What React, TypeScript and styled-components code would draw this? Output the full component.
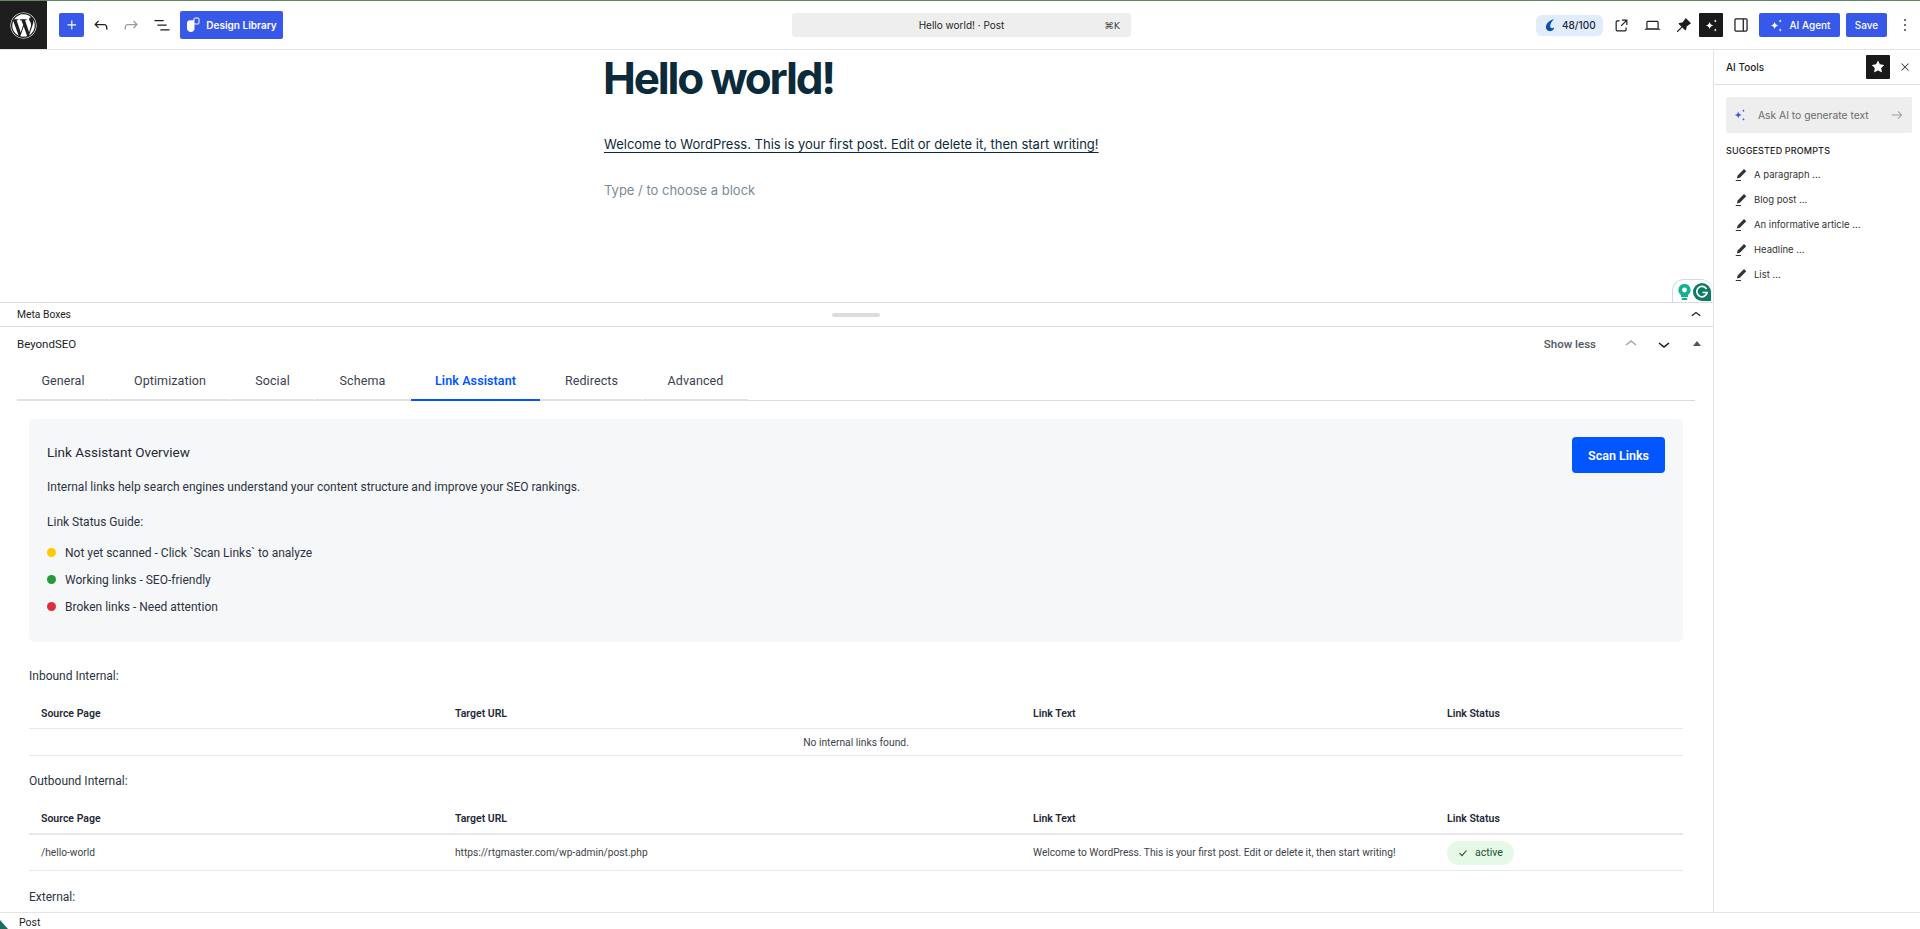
import React from "react";
import styled, { createGlobalStyle } from "styled-components";
import { FaWordpress } from "react-icons/fa";

const GlobalStyle = createGlobalStyle`
  html, body {
    margin: 0;
    padding: 0;
    background: #fff;
    font-family: Inter, "Liberation Sans", sans-serif;
    color: #1e1e1e;
  }
  * { box-sizing: border-box; }
`;

const Icon = ({ d, size = 24, color = "currentColor" }: { d: string; size?: number; color?: string }) => (
  <svg width={size} height={size} viewBox="0 0 24 24" fill={color} aria-hidden="true">
    <path d={d} />
  </svg>
);

const paths = {
  plus: "M11 12.5V17.5H12.5V12.5H17.5V11H12.5V6H11V11H6V12.5H11Z",
  undo: "M18.3 11.7c-.6-.6-1.4-.9-2.3-.9H6.7l2.9-3.3-1.1-1-4.5 5L8.5 16l1-1-2.7-2.7H16c.5 0 .9.2 1.3.5 1 1 1 3.4 1 4.5v.3h1.5v-.2c0-1.5 0-4.3-1.5-5.7z",
  redo: "M15.6 6.5l-1.1 1 2.9 3.3H8c-.9 0-1.7.3-2.3.9-1.4 1.5-1.4 4.2-1.4 5.6v.2h1.5v-.3c0-1.1 0-3.5 1-4.5.3-.3.7-.5 1.3-.5h9.2L14.5 15l1.1 1.1 4.6-4.6-4.6-5z",
  list: "M3 6h11v1.5H3V6zm3.5 5.5h11V13h-11v-1.5zM21 17H10v1.5h11V17z",
  external: "M19.5 4.5h-7V6h4.44l-5.97 5.97 1.06 1.06L18 7.06v4.44h1.5v-7Zm-13 1a2 2 0 0 0-2 2v10a2 2 0 0 0 2 2h10a2 2 0 0 0 2-2v-3H17v3a.5.5 0 0 1-.5.5h-10a.5.5 0 0 1-.5-.5v-10a.5.5 0 0 1 .5-.5h3V5.5h-3Z",
  laptop: "M20.5 16h-.7V8c0-1.1-.9-2-2-2H6.2c-1.1 0-2 .9-2 2v8h-.7c-.8 0-1.5.7-1.5 1.5h20c0-.8-.7-1.5-1.5-1.5zM5.7 8c0-.3.2-.5.5-.5h11.6c.3 0 .5.2.5.5v7.6H5.7V8z",
  pin: "m21.5 9.1-6.6-6.6-4.2 5.6c-1.2-.1-2.4.1-3.6.7-.1 0-.1.1-.2.1-.5.3-.9.6-1.2.9l3.7 3.7-5.7 5.7v1.1h1.1l5.7-5.7 3.7 3.7c.4-.4.7-.8.9-1.2.1-.1.1-.2.2-.3.6-1.1.8-2.4.6-3.6l5.6-4.1z",
  sidebar: "M18 4H6c-1.1 0-2 .9-2 2v12c0 1.1.9 2 2 2h12c1.1 0 2-.9 2-2V6c0-1.1-.9-2-2-2zm-4 14.5H6c-.3 0-.5-.2-.5-.5V6c0-.3.2-.5.5-.5h8v13zm4.5-.5c0 .3-.2.5-.5.5h-2.5v-13H18c.3 0 .5.2.5.5v12z",
  dots: "M13 19h-2v-2h2v2zm0-6h-2v-2h2v2zm0-6h-2V5h2v2z",
  close: "m13.06 12 6.47-6.47-1.06-1.06L12 10.94 5.53 4.47 4.47 5.53 10.94 12l-6.47 6.47 1.06 1.06L12 13.06l6.47 6.47 1.06-1.06L13.06 12Z",
  star: "M11.776 4.454a.25.25 0 01.448 0l2.069 4.192a.25.25 0 00.188.137l4.626.672a.25.25 0 01.139.426l-3.348 3.263a.25.25 0 00-.072.222l.79 4.607a.25.25 0 01-.362.263l-4.138-2.175a.25.25 0 00-.232 0l-4.138 2.175a.25.25 0 01-.363-.263l.79-4.607a.25.25 0 00-.071-.222L4.754 9.881a.25.25 0 01.139-.426l4.626-.672a.25.25 0 00.188-.137l2.069-4.192z",
  pencil: "m19 7-3-3-8.5 8.5-1 4 4-1L19 7Zm-7 11.5H5V20h7v-1.5Z",
  up: "M6.5 12.4L12 8l5.5 4.4-.9 1.2L12 10l-4.5 3.6-1-1.2z",
  down: "M17.5 11.6L12 16l-5.5-4.4.9-1.2L12 14l4.5-3.6 1 1.2z",
  arrow: "m14 6-1.1 1 4.2 4.3H4v1.5h13.1l-4.2 4.2 1.1 1 6-6-6-6z",
  sparkle: "M9 6c.7 3.6 2.4 5.3 6 6-3.6.7-5.3 2.4-6 6-.7-3.6-2.4-5.3-6-6 3.6-.7 5.3-2.4 6-6Zm9-4c.3 1.6 1 2.4 2.6 2.7-1.6.3-2.3 1-2.6 2.6-.3-1.6-1-2.3-2.6-2.6C17 4.4 17.7 3.6 18 2Zm0 14.5c.3 1.6 1 2.4 2.6 2.7-1.6.3-2.3 1-2.6 2.6-.3-1.6-1-2.3-2.6-2.6 1.6-.3 2.3-1.1 2.6-2.7Z",
};

const Page = styled.div`
  height: 929px;
  display: flex;
  flex-direction: column;
  overflow: hidden;
  border-top: 1px solid #5c8a60;
`;

const Header = styled.header`
  height: 49px;
  flex: none;
  display: grid;
  grid-template-columns: 792px 339px 1fr;
  align-items: center;
  border-bottom: 1px solid #e4e4e4;
`;

const HeaderLeft = styled.div`
  display: flex;
  align-items: center;
  height: 48px;
`;

const LogoBox = styled.div`
  width: 47px;
  height: 48px;
  background: #1e1e1e;
  color: #fff;
  display: flex;
  align-items: center;
  justify-content: center;
  margin-right: 12px;
`;

const BlueButton = styled.button<{ $w: number; $h?: number; $weight?: number }>`
  width: ${(p) => p.$w}px;
  height: ${(p) => p.$h ?? 24}px;
  border: 0;
  border-radius: 2px;
  background: #3858e9;
  color: #fff;
  padding: 0;
  display: flex;
  align-items: center;
  justify-content: center;
  gap: 6px;
  font: ${(p) => p.$weight ?? 500} 10px Inter, sans-serif;
`;

const IconSlot = styled.span<{ $w?: number; $color?: string; $push?: boolean }>`
  width: ${(p) => p.$w ?? 30}px;
  flex: none;
  display: flex;
  align-items: center;
  justify-content: center;
  color: ${(p) => p.$color ?? "#1e1e1e"};
  margin-left: ${(p) => (p.$push ? "auto" : 0)};
`;

const CommandBar = styled.div`
  height: 24px;
  background: #eeeeee;
  border-radius: 3px;
  font-size: 10px;
  color: #1e1e1e;
  position: relative;
  display: flex;
  align-items: center;
  justify-content: center;
`;

const Shortcut = styled.span`
  position: absolute;
  right: 11px;
  font-family: "DejaVu Sans", sans-serif;
  font-size: 9.5px;
  color: #444;
`;

const HeaderRight = styled.div`
  display: flex;
  align-items: center;
  padding-left: 405px;
`;

const ScorePill = styled.div`
  width: 67px;
  height: 21px;
  border-radius: 6px;
  background: #e1edfd;
  display: flex;
  align-items: center;
  gap: 5px;
  padding-left: 8px;
  font-size: 10px;
  font-weight: 500;
  color: #1e2a3a;
  margin-right: 3px;
`;

const BlackTile = styled.div<{ $push?: boolean }>`
  width: 24px;
  height: 24px;
  background: #1a1a1a;
  color: #fff;
  border-radius: 1px;
  display: flex;
  align-items: center;
  justify-content: center;
  flex: none;
  margin-left: ${(p) => (p.$push ? "auto" : 0)};
`;

const Body = styled.div`
  flex: 1;
  min-height: 0;
  display: flex;
`;

const Main = styled.main`
  width: 1713px;
  flex: none;
  display: flex;
  flex-direction: column;
  min-height: 0;
`;

const Canvas = styled.section`
  height: 252px;
  flex: none;
  padding-left: 604px;
  position: relative;
  color: #0c2b3a;
`;

const Title = styled.h1`
  margin: 0 0 0 -1px;
  height: 61px;
  font-size: 44px;
  line-height: 56px;
  font-weight: 700;
  letter-spacing: -2.2px;
`;

const Paragraph = styled.p`
  margin: 23px 0 0;
  font-size: 13px;
  line-height: 20px;
  text-decoration: underline;
  text-underline-offset: 3px;
  text-decoration-thickness: 1px;
`;

const Placeholder = styled.p`
  margin: 26px 0 0;
  font-size: 13px;
  line-height: 20px;
  color: #7b8b95;
`;

const GrammarlyWidget = styled.div`
  position: absolute;
  right: 0;
  bottom: 0;
  width: 41px;
  height: 23px;
  background: #fff;
  border: 1px solid #d5d9e3;
  border-bottom: 0;
  border-right: 0;
  border-radius: 12px 12px 0 0;
  display: flex;
  align-items: center;
  justify-content: space-between;
  padding: 2px 2px 0 4px;
`;

const MetaBar = styled.div`
  height: 25px;
  flex: none;
  display: flex;
  align-items: center;
  justify-content: space-between;
  border-top: 1px solid #dcdcde;
  border-bottom: 1px solid #dcdcde;
  padding: 0 7px 0 17px;
  font: 400 10.3px Roboto, sans-serif;
  color: #1e1e1e;
  position: relative;
`;

const DragHandle = styled.span`
  position: absolute;
  left: 832px;
  top: 10px;
  width: 48px;
  height: 4px;
  border-radius: 2px;
  background: #dcdcdc;
`;

const Scroller = styled.div`
  flex: 1;
  min-height: 0;
  overflow: hidden;
  font-family: Roboto, sans-serif;
`;

const BoxHeader = styled.div`
  height: 36px;
  display: flex;
  align-items: center;
  padding: 0 6px 3px 17px;
  font-size: 11.5px;
  color: #1e1e1e;
`;

const ShowLess = styled.span`
  margin-left: auto;
  margin-right: 18px;
  font-size: 11.5px;
  font-weight: 500;
  color: #50575e;
`;

const Triangle = styled.span`
  width: 0;
  height: 0;
  border-left: 4px solid transparent;
  border-right: 4px solid transparent;
  border-bottom: 5px solid #50575e;
  margin: 0 6px 0 13px;
`;

const Tabs = styled.nav`
  height: 38px;
  margin: 0 18px 0 17px;
  display: flex;
  border-bottom: 1px solid #dcdcde;
`;

const Tab = styled.a<{ $active?: boolean; $w: number }>`
  width: ${(p) => p.$w}px;
  height: 38px;
  padding-bottom: 1px;
  display: flex;
  align-items: center;
  justify-content: center;
  font-size: 12.5px;
  letter-spacing: 0.1px;
  font-weight: ${(p) => (p.$active ? 600 : 400)};
  color: ${(p) => (p.$active ? "#0256ff" : "#3a4150")};
  border-bottom: 2px solid ${(p) => (p.$active ? "#0256ff" : "#dfe1e6")};
  margin-right: 1px;
`;

const Content = styled.div`
  padding: 18px 30px 0 29px;
`;

const Overview = styled.div`
  position: relative;
  height: 223px;
  border-radius: 6px;
  background: #f6f7f9;
  padding: 23px 18px 0;
  color: #1f2937;
`;

const OverviewTitle = styled.h3`
  margin: 0;
  font-size: 13.5px;
  line-height: 20px;
  font-weight: 400;
`;

const OverviewText = styled.p`
  margin: 15px 0 0;
  font-size: 12px;
  line-height: 20px;
  color: #2b3442;
`;

const Guide = styled.ul`
  list-style: none;
  margin: 7px 0 0;
  padding: 0;
  font-size: 12px;
  color: #2b3442;
`;

const GuideItem = styled.li`
  height: 27px;
  display: flex;
  align-items: center;
  gap: 9px;
`;

const Dot = styled.span<{ $color: string }>`
  width: 9px;
  height: 9px;
  border-radius: 50%;
  background: ${(p) => p.$color};
`;

const ScanButton = styled.button`
  position: absolute;
  top: 18px;
  right: 18px;
  width: 93px;
  height: 36px;
  border: 0;
  border-radius: 4px;
  background: #0256ff;
  color: #fff;
  font: 600 12.5px Roboto, sans-serif;
`;

const SectionLabel = styled.h4<{ $top: number }>`
  margin: ${(p) => p.$top}px 0 0;
  font-size: 12px;
  line-height: 18px;
  font-weight: 400;
  color: #2b3442;
`;

const TableRow = styled.div<{ $h: number; $thick?: boolean; $head?: boolean }>`
  height: ${(p) => p.$h}px;
  padding-top: ${(p) => (p.$head ? 14 : 0)}px;
  display: grid;
  grid-template-columns: 414px 578px 414px 1fr;
  align-items: center;
  border-bottom: ${(p) => (p.$thick ? 2 : 1)}px solid #e8e9eb;
`;

const HeadCell = styled.span`
  padding-left: 12px;
  font-size: 10.5px;
  font-weight: 600;
  color: #1f2937;
`;

const Cell = styled.span`
  padding-left: 12px;
  font-size: 10.2px;
  color: #3c434a;
`;

const EmptyRow = styled.div`
  height: 27px;
  display: flex;
  align-items: center;
  justify-content: center;
  border-bottom: 1px solid #e8e9eb;
  font-size: 10.3px;
  color: #3c434a;
`;

const ActiveBadge = styled.span`
  margin-left: 12px;
  width: 67px;
  height: 24px;
  border-radius: 12px;
  background: #e6f8e8;
  color: #14532d;
  font-size: 10.5px;
  display: flex;
  align-items: center;
  gap: 7px;
  padding-left: 11px;
`;

const Sidebar = styled.aside`
  flex: 1;
  border-left: 1px solid #e4e4e4;
`;

const SidebarHead = styled.div`
  height: 35px;
  display: flex;
  align-items: center;
  padding-left: 12px;
  border-bottom: 1px solid #e0e0e0;
  font-size: 10px;
  font-weight: 500;
  color: #1e1e1e;
`;

const SidebarBody = styled.div`
  padding: 12px 8px 0 12px;
`;

const AskBox = styled.div`
  height: 36px;
  background: #eeeeee;
  border-radius: 2px;
  display: flex;
  align-items: center;
  padding: 0 7px 0 6px;
  font-size: 10.3px;
  color: #6b6b6b;
`;

const AskText = styled.span`
  margin-left: 10px;
`;

const SectionCaption = styled.div`
  margin-top: 12px;
  font-size: 9px;
  line-height: 12px;
  font-weight: 500;
  letter-spacing: 0.15px;
  color: #1e1e1e;
`;

const PromptList = styled.div`
  margin-top: 5px;
`;

const Prompt = styled.div`
  height: 25px;
  display: flex;
  align-items: center;
  padding-left: 6px;
  gap: 4px;
  font-size: 9.5px;
  color: #333;
`;

const Footer = styled.footer`
  height: 17px;
  flex: none;
  position: relative;
  border-top: 1px solid #e4e4e4;
  padding: 2px 0 0 19px;
  display: flex;
  align-items: center;
  font: 400 10.5px Roboto, sans-serif;
  color: #1e1e1e;
`;

const CornerMark = styled.svg`
  position: absolute;
  left: 0;
  bottom: 0;
`;

const tabs = [
  { label: "General", w: 92 },
  { label: "Optimization", w: 120 },
  { label: "Social", w: 83 },
  { label: "Schema", w: 95 },
  { label: "Link Assistant", w: 129, active: true },
  { label: "Redirects", w: 101 },
  { label: "Advanced", w: 105 },
];

const prompts = ["A paragraph ...", "Blog post ...", "An informative article ...", "Headline ...", "List ..."];

const TableHead = ({ thick }: { thick?: boolean }) => (
  <TableRow $head $h={thick ? 45 : 44} $thick={thick}>
    <HeadCell>Source Page</HeadCell>
    <HeadCell>Target URL</HeadCell>
    <HeadCell>Link Text</HeadCell>
    <HeadCell>Link Status</HeadCell>
  </TableRow>
);

const App = () => {
  return (
    <>
      <GlobalStyle />
      <Page>
        <Header>
          <HeaderLeft>
            <LogoBox>
              <FaWordpress size={27} />
            </LogoBox>
            <BlueButton $w={25}>
              <Icon d={paths.plus} size={18} />
            </BlueButton>
            <IconSlot $w={34}><Icon d={paths.undo} size={20} /></IconSlot>
            <IconSlot $w={26} $color="#9a9a9a"><Icon d={paths.redo} size={20} /></IconSlot>
            <IconSlot $w={36}><Icon d={paths.list} size={20} /></IconSlot>
            <BlueButton $w={103} $h={28} $weight={600}>
              <svg width="14" height="16" viewBox="0 0 14 16" fill="none">
                <path d="M1 6c0-1.6 1.2-2.8 2.800-2.800H8.500V11.500C8.500 13.500 7 15 5 15 2.800 15 1 13.500 1 11.500Z" fill="#fff" />
                <rect x="8" y="1" width="5" height="6" rx="1" stroke="#fff" fill="#3858e9" />
              </svg>
              Design Library
            </BlueButton>
          </HeaderLeft>
          <CommandBar>
            Hello world! · Post
            <Shortcut>⌘K</Shortcut>
          </CommandBar>
          <HeaderRight>
            <ScorePill>
              <svg width="13" height="14" viewBox="0 0 13 14">
                <path d="M10 1C5 2.500 1.500 6 2 10c.3 2.500 3 3.500 5 3 2-.6 3.500-2 3-3.500C8 11 6 10 6.200 7.500 6.400 5 8.500 3 10 1Z" fill="#0b4fb3" />
              </svg>
              48/100
            </ScorePill>
            <IconSlot $w={31}><Icon d={paths.external} size={19} /></IconSlot>
            <IconSlot $w={30}><Icon d={paths.laptop} size={19} /></IconSlot>
            <IconSlot $w={32}><Icon d={paths.pin} size={19} /></IconSlot>
            <BlackTile><Icon d={paths.sparkle} size={15} /></BlackTile>
            <IconSlot $w={36}><Icon d={paths.sidebar} size={20} /></IconSlot>
            <BlueButton $w={81}>
              <Icon d={paths.sparkle} size={15} />
              AI Agent
            </BlueButton>
            <IconSlot $w={6} />
            <BlueButton $w={41}>Save</BlueButton>
            <IconSlot $w={36}><Icon d={paths.dots} size={20} /></IconSlot>
          </HeaderRight>
        </Header>
        <Body>
          <Main>
            <Canvas>
              <Title>Hello world!</Title>
              <Paragraph>Welcome to WordPress. This is your first post. Edit or delete it, then start writing!</Paragraph>
              <Placeholder>Type / to choose a block</Placeholder>
              <GrammarlyWidget>
                <svg width="15" height="18" viewBox="0 0 15 18">
                  <path d="M7.500 1a6 6 0 0 0-3.500 10.900V14h7v-2.100A6 6 0 0 0 7.500 1Z" fill="#10b28f" />
                  <circle cx="7.500" cy="7" r="2.400" fill="#fff" />
                  <rect x="4.500" y="15" width="6" height="2" rx="1" fill="#10b28f" />
                </svg>
                <svg width="18" height="18" viewBox="0 0 18 18">
                  <path d="M9 0a9 9 0 0 1 9 9v9H9a9 9 0 0 1-9-9 9 9 0 0 1 9-9Z" fill="#0c7a65" />
                  <path d="M13.500 6a5.200 5.200 0 1 0 .6 3.500H9.500" fill="none" stroke="#fff" strokeWidth="1.700" />
                </svg>
              </GrammarlyWidget>
            </Canvas>
            <MetaBar>
              Meta Boxes
              <DragHandle />
              <Icon d={paths.up} size={20} />
            </MetaBar>
            <Scroller>
              <BoxHeader>
                BeyondSEO
                <ShowLess>Show less</ShowLess>
                <IconSlot $w={33} $color="#a7aaad"><Icon d={paths.up} size={24} /></IconSlot>
                <IconSlot $w={33}><Icon d={paths.down} size={24} /></IconSlot>
                <Triangle />
              </BoxHeader>
              <Tabs>
                {tabs.map((tab) => (
                  <Tab key={tab.label} $w={tab.w} $active={tab.active}>
                    {tab.label}
                  </Tab>
                ))}
              </Tabs>
              <Content>
                <Overview>
                  <OverviewTitle>Link Assistant Overview</OverviewTitle>
                  <ScanButton>Scan Links</ScanButton>
                  <OverviewText>Internal links help search engines understand your content structure and improve your SEO rankings.</OverviewText>
                  <OverviewText>Link Status Guide:</OverviewText>
                  <Guide>
                    <GuideItem><Dot $color="#ffc800" />Not yet scanned - Click `Scan Links` to analyze</GuideItem>
                    <GuideItem><Dot $color="#279a36" />Working links - SEO-friendly</GuideItem>
                    <GuideItem><Dot $color="#dc2f3c" />Broken links - Need attention</GuideItem>
                  </Guide>
                </Overview>
                <SectionLabel $top={25}>Inbound Internal:</SectionLabel>
                <TableHead />
                <EmptyRow>No internal links found.</EmptyRow>
                <SectionLabel $top={16}>Outbound Internal:</SectionLabel>
                <TableHead thick />
                <TableRow $h={36}>
                  <Cell>/hello-world</Cell>
                  <Cell>https://rtgmaster.com/wp-admin/post.php</Cell>
                  <Cell>Welcome to WordPress. This is your first post. Edit or delete it, then start writing!</Cell>
                  <ActiveBadge>
                    <svg width="10" height="10" viewBox="0 0 10 10" fill="none">
                      <path d="M1.500 5.200 4 7.600 8.500 2.500" stroke="#14532d" strokeWidth="1.100" />
                    </svg>
                    active
                  </ActiveBadge>
                </TableRow>
                <SectionLabel $top={17}>External:</SectionLabel>
              </Content>
            </Scroller>
          </Main>
          <Sidebar>
            <SidebarHead>
              AI Tools
              <BlackTile $push><Icon d={paths.star} size={20} /></BlackTile>
              <IconSlot $w={30}><Icon d={paths.close} size={12} /></IconSlot>
            </SidebarHead>
            <SidebarBody>
              <AskBox>
                <IconSlot $w={16} $color="#3858e9"><Icon d={paths.sparkle} size={14} /></IconSlot>
                <AskText>Ask AI to generate text</AskText>
                <IconSlot $w={16} $color="#a0a0a0" $push><Icon d={paths.arrow} size={16} /></IconSlot>
              </AskBox>
              <SectionCaption>SUGGESTED PROMPTS</SectionCaption>
              <PromptList>
                {prompts.map((text) => (
                  <Prompt key={text}>
                    <Icon d={paths.pencil} size={18} />
                    {text}
                  </Prompt>
                ))}
              </PromptList>
            </SidebarBody>
          </Sidebar>
        </Body>
        <Footer>
          <CornerMark width="8" height="9" viewBox="0 0 8 9">
            <path d="M0 0 8 9H0Z" fill="#1f6b5c" />
          </CornerMark>
          Post
        </Footer>
      </Page>
    </>
  );
};

export default App;
